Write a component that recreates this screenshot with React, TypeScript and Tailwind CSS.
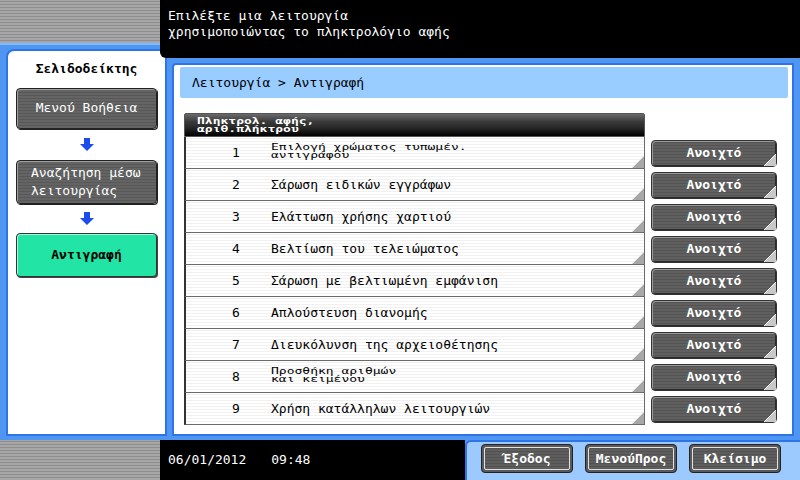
import React from "react";

const mono = { fontFamily: '"DejaVu Sans Mono", "Liberation Mono", monospace' };

const rows = [
  { n: 1, t: "Επιλογή χρώματος τυπωμέν.", t2: "αντιγράφου" },
  { n: 2, t: "Σάρωση ειδικών εγγράφων" },
  { n: 3, t: "Ελάττωση χρήσης χαρτιού" },
  { n: 4, t: "Βελτίωση του τελειώματος" },
  { n: 5, t: "Σάρωση με βελτιωμένη εμφάνιση" },
  { n: 6, t: "Απλούστευση διανομής" },
  { n: 7, t: "Διευκόλυνση της αρχειοθέτησης" },
  { n: 8, t: "Προσθήκη αριθμών", t2: "και κειμένου" },
  { n: 9, t: "Χρήση κατάλληλων λειτουργιών" },
];

const Corner = ({ light }: { light?: boolean }) => (
  <svg width="12" height="12" viewBox="0 0 12 12" className="absolute right-0 bottom-0">
    <polygon points="12,0 12,12 0,12" fill={light ? "#c8c8c8" : "#a8a8a8"} />
    <line x1="12" y1="0" x2="0" y2="12" stroke={light ? "#ffffff" : "#e0e0e0"} strokeWidth="1" />
  </svg>
);

const Arrow = () => (
  <div className="flex justify-center">
    <svg width="14" height="13" viewBox="0 0 14 13">
      <polygon points="4,0 10,0 10,6 14,6 7,13 0,6 4,6" fill="#1a4cf0" />
    </svg>
  </div>
);

const OpenButton = () => (
  <div className="relative ml-[6px] flex h-[27px] w-[126px] items-center justify-center rounded-[4px] border border-[#333] bg-[repeating-linear-gradient(0deg,#606060_0px,#606060_2px,#545454_2px,#545454_3px)] shadow-[inset_1px_1px_0_#9a9a9a,inset_-1px_-1px_0_#2a2a2a] text-[13px] font-bold text-white">
    Ανοιχτό
    <Corner light />
  </div>
);

const BottomButton = ({ label }: { label: string }) => (
  <div className="flex h-[29px] w-[92px] items-center justify-center rounded-[4px] border border-[#222] bg-[#5a5a5a] p-[2px]">
    <div className="flex h-full w-full items-center justify-center rounded-[2px] border border-[#e0e0e0] bg-[repeating-linear-gradient(0deg,#5e5e5e_0px,#5e5e5e_2px,#525252_2px,#525252_3px)] text-[13px] font-bold text-white">
      {label}
    </div>
  </div>
);

const grey = "bg-[repeating-linear-gradient(0deg,#a6a6a6_0px,#a6a6a6_2px,#8e8e8e_2px,#8e8e8e_3px)]";

export default function App() {
  return (
    <div className="flex h-[480px] w-[800px] flex-col overflow-hidden bg-[#4f95f2]" style={mono}>
      {/* top */}
      <div className="flex h-[43px]">
        <div className={`h-[43px] w-[160px] ${grey}`} />
        <div className="relative z-10 h-[58px] flex-1 rounded-bl-[6px] bg-black pl-[8px] pt-[8px] text-[13px] leading-[16px] text-white">
          <div>Επιλέξτε μια λειτουργία</div>
          <div>χρησιμοποιώντας το πληκτρολόγιο αφής</div>
        </div>
      </div>

      {/* middle */}
      <div className="flex flex-1 border-t-[2px] border-[#7fbaff] pb-[4px] pl-[6px] pr-[6px]">
        <div className="mt-[4px] flex w-[161px] flex-col rounded-t-[8px] border-[2px] border-[#2f74e6] bg-white px-[8px] pt-[8px]">
          <div className="mb-[9px] text-center text-[13px] font-bold text-black">Σελιδοδείκτης</div>
          <div className="flex h-[41px] items-center justify-center rounded-[4px] border border-[#222] bg-[repeating-linear-gradient(0deg,#646464_0px,#646464_2px,#585858_2px,#585858_3px)] shadow-[inset_1px_1px_0_#a0a0a0,1px_1px_0_#222] text-[13px] text-white">
            Μενού Βοήθεια
          </div>
          <div className="py-[9px]"><Arrow /></div>
          <div className="flex h-[44px] flex-col justify-center rounded-[4px] border border-[#222] bg-[repeating-linear-gradient(0deg,#646464_0px,#646464_2px,#585858_2px,#585858_3px)] pl-[14px] shadow-[inset_1px_1px_0_#a0a0a0,1px_1px_0_#222] text-[13px] leading-[18px] text-white">
            <div>Αναζήτηση μέσω</div>
            <div>λειτουργίας</div>
          </div>
          <div className="py-[8px]"><Arrow /></div>
          <div className="flex h-[44px] items-center justify-center rounded-[4px] border border-[#333] bg-[#22e4a4] shadow-[inset_1px_1px_0_#a8f5dc,1px_1px_0_#444] text-[13px] font-bold text-black">
            Αντιγραφή
          </div>
        </div>

        <div className="mt-[18px] ml-[5px] flex flex-1 flex-col rounded-tl-[4px] border-[2px] border-[#2f74e6] bg-white pl-[6px] pr-[4px] pt-[2px]">
          <div className="flex h-[31px] items-center rounded-[2px] bg-[#99ccff] pl-[12px] text-[13px] text-black">
            Λειτουργία &gt; Αντιγραφή
          </div>
          <div className="mt-[15px] ml-[4px] flex flex-col">
            <div className="flex">
              <div className="flex h-[24px] w-[461px] items-center rounded-t-[2px] border border-[#555] bg-[linear-gradient(180deg,#6a6a6a_0%,#3a3a3a_35%,#2a2a2a_60%,#000_100%)] pl-[12px] text-white">
                <div className="scale-y-[0.62] text-[13px] font-bold leading-[13px]">
                  <div>Πληκτρολ. αφής,</div>
                  <div>αριθ.πλήκτρου</div>
                </div>
              </div>
            </div>
            {rows.map((r) => (
              <div key={r.n} className="flex h-[32px] items-center">
                <div className="relative flex h-[32px] w-[461px] items-center border-b border-l-[2px] border-r border-[#6a6a6a] border-l-[#333] bg-[repeating-linear-gradient(0deg,#ffffff_0px,#ffffff_2px,#f1f1f1_2px,#f1f1f1_3px)] text-black">
                  <div className="ml-[40px] w-[20px] text-center text-[13px]">{r.n}</div>
                  {r.t2 ? (
                    <div className="ml-[25px] -translate-y-[2px] scale-y-[0.66] text-[13px] leading-[13px]">
                      <div>{r.t}</div>
                      <div>{r.t2}</div>
                    </div>
                  ) : (
                    <div className="ml-[25px] text-[13px]">{r.t}</div>
                  )}
                  <Corner />
                </div>
                <OpenButton />
              </div>
            ))}
          </div>
        </div>
      </div>

      {/* bottom */}
      <div className="flex h-[40px]">
        <div className={`h-full w-[160px] ${grey}`} />
        <div className="flex h-full w-[305px] items-center bg-black pl-[8px] text-[13px] text-white">
          <span>06/01/2012</span>
          <span className="ml-[25px]">09:48</span>
        </div>
        <div className="flex h-full flex-1 gap-[12px] rounded-tl-[6px] border-l-[2px] border-t-[2px] border-[#2f74e6] bg-[#9ccaff] pl-[14px] pt-[2px]">
          <BottomButton label="Έξοδος" />
          <BottomButton label="ΜενούΠρος" />
          <BottomButton label="Κλείσιμο" />
        </div>
      </div>
    </div>
  );
}
